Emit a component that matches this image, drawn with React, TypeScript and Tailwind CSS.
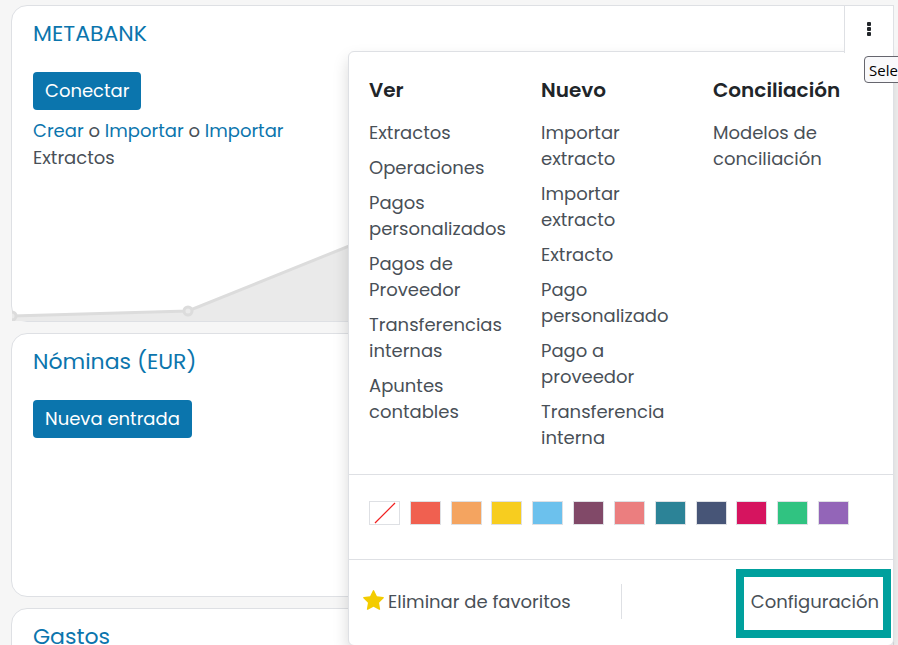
import type { ReactNode } from 'react';

type MenuGroup = { title: string; items: string[] };

const groups: MenuGroup[] = [
  {
    title: 'Ver',
    items: [
      'Extractos',
      'Operaciones',
      'Pagos personalizados',
      'Pagos de Proveedor',
      'Transferencias internas',
      'Apuntes contables',
    ],
  },
  {
    title: 'Nuevo',
    items: [
      'Importar extracto',
      'Importar extracto',
      'Extracto',
      'Pago personalizado',
      'Pago a proveedor',
      'Transferencia interna',
    ],
  },
  { title: 'Conciliación', items: ['Modelos de conciliación'] },
];

const swatches = [
  { name: 'Rojo', color: 'bg-[#f06050]' },
  { name: 'Naranja', color: 'bg-[#f4a460]' },
  { name: 'Amarillo', color: 'bg-[#f7cd1f]' },
  { name: 'Celeste', color: 'bg-[#6cc1ed]' },
  { name: 'Púrpura oscuro', color: 'bg-[#814968]' },
  { name: 'Rosa salmón', color: 'bg-[#eb7e7f]' },
  { name: 'Azul medio', color: 'bg-[#2c8397]' },
  { name: 'Azul oscuro', color: 'bg-[#475577]' },
  { name: 'Fucsia', color: 'bg-[#d6145f]' },
  { name: 'Verde', color: 'bg-[#30c381]' },
  { name: 'Púrpura', color: 'bg-[#9365b8]' },
];

function Card({ title, className, children }: { title: string; className: string; children?: ReactNode }) {
  return (
    <section className={`relative flex flex-col rounded-2xl border border-[#dee0e4] bg-white ${className}`}>
      <h2 className="px-[21px] pt-3 text-[22px] leading-8">
        <a href="#" className="text-[#0b75ad]">{title}</a>
      </h2>
      {children}
    </section>
  );
}

function PrimaryButton({ children }: { children: ReactNode }) {
  return (
    <button type="button" className="h-[38px] rounded bg-[#0b75ad] px-3 text-lg leading-6 text-white">
      {children}
    </button>
  );
}

function BalanceChart() {
  return (
    <svg className="mt-auto block h-[90px] w-full rounded-br-2xl" aria-hidden="true">
      <path d="M0 85L176 80L352 9L528 5L704 3L900 2V90H0Z" fill="#eaeaea" />
      <path d="M0 85L176 80L352 9L528 5L704 3L900 2" fill="none" stroke="#dcdcdc" strokeWidth="3" />
      <circle cx="0" cy="85" r="4" fill="#eaeaea" stroke="#dcdcdc" strokeWidth="3" />
      <circle cx="176" cy="80" r="4" fill="#eaeaea" stroke="#dcdcdc" strokeWidth="3" />
    </svg>
  );
}

function StarIcon() {
  return (
    <svg viewBox="0 0 1664 1600" className="mb-1 h-5 w-[21px]" fill="#f3cc00" aria-hidden="true">
      <path d="M1664 615q0 22-26 48l-363 354 86 500q1 7 1 20 0 21-10.500 35.500t-30.500 14.500q-19 0-40-12l-449-236-449 236q-22 12-40 12-21 0-31.500-14.500t-10.500-35.500q0-6 2-20l86-500-364-354q-25-27-25-48 0-37 56-46l502-73 225-455q19-41 49-41t49 41l225 455 502 73q56 9 56 46z" />
    </svg>
  );
}

function JournalMenu() {
  return (
    <div className="absolute top-[45px] -right-px z-10 w-[546px] rounded-b-md rounded-tl-md border border-[#dee0e4] bg-white shadow-[0_8px_16px_rgba(0,0,0,0.15)]">
      <div className="grid h-[422px] grid-cols-3 pr-2 pl-5">
        {groups.map((group) => (
          <div key={group.title} className="pt-6">
            <h3 className="text-xl leading-7 font-semibold text-[#212529]">{group.title}</h3>
            <ul className="mt-4 flex flex-col gap-[9px] pr-8">
              {group.items.map((item, index) => (
                <li key={index} className="text-lg leading-[26px]">
                  <a href="#" className="block">{item}</a>
                </li>
              ))}
            </ul>
          </div>
        ))}
      </div>
      <div className="flex h-[85px] items-center border-t border-[#dee0e4] px-5 pb-2">
        <div className="flex w-[480px] justify-between">
          <button type="button" aria-label="Sin color" className="h-6 w-[31px] border border-[#dee0e4] bg-white">
            <svg viewBox="0 0 29 22" className="block h-full w-full" aria-hidden="true">
              <path d="M5 21L25 1" stroke="#f02020" strokeWidth="1.200" />
            </svg>
          </button>
          {swatches.map((swatch) => (
            <button
              key={swatch.name}
              type="button"
              aria-label={swatch.name}
              className={`h-6 w-[31px] border border-[#dee0e4] ${swatch.color}`}
            />
          ))}
        </div>
      </div>
      <div className="flex h-[86px] items-start justify-between border-t border-[#dee0e4] pt-[9px] pr-0.5 pl-[14px] text-lg leading-[26px]">
        <div className="mt-[15px] flex h-[35px] w-[259px] items-center border-r border-[#dee0e4]">
          <button type="button" className="flex items-center gap-1">
            <StarIcon />
            Eliminar de favoritos
          </button>
        </div>
        <a href="#" className="flex h-[69px] w-[155px] items-center justify-end border-8 border-[#00a09d] pr-1 pb-1 whitespace-nowrap">
          Configuración
        </a>
      </div>
    </div>
  );
}

export default function App() {
  return (
    <main className="flex h-screen flex-col gap-[11px] overflow-hidden bg-[#f6f6f6] pt-[5px] pr-1 pl-[11px] font-['Poppins','Inter',sans-serif] text-[#495057]">
      <Card title="METABANK" className="z-10 h-[317px] shrink-0">
        <div className="mt-[22px] px-[21px]">
          <PrimaryButton>Conectar</PrimaryButton>
          <p className="mt-[7px] w-64 text-lg leading-[27px]">
            <a href="#" className="text-[#0b75ad]">Crear</a> o <a href="#" className="text-[#0b75ad]">Importar</a> o{' '}
            <a href="#" className="text-[#0b75ad]">Importar</a> Extractos
          </p>
        </div>
        <BalanceChart />
        <JournalMenu />
        <button
          type="button"
          aria-label="Selección"
          className="absolute -top-px -right-px z-20 flex h-[48px] w-[50px] items-center justify-center border-t border-r border-l border-[#dee0e4] bg-white pb-px text-[#212529]"
        >
          <svg viewBox="0 0 4 14" className="h-[14px] w-1" fill="currentColor" aria-hidden="true">
            <rect width="4" height="4" rx="1" />
            <rect y="5" width="4" height="4" rx="1" />
            <rect y="10" width="4" height="4" rx="1" />
          </svg>
        </button>
        <div
          role="tooltip"
          className="absolute top-[50px] left-full z-30 -ml-[29px] h-[27px] rounded border border-[#66666e] bg-[#f9f9fb] px-1 font-['Open_Sans',sans-serif] text-[15px] leading-[26px] text-black"
        >
          Selección
        </div>
      </Card>
      <Card title="Nóminas (EUR)" className="h-[264px] shrink-0">
        <div className="mt-[22px] px-[21px]">
          <PrimaryButton>Nueva entrada</PrimaryButton>
        </div>
      </Card>
      <Card title="Gastos" className="h-[264px] shrink-0" />
    </main>
  );
}
